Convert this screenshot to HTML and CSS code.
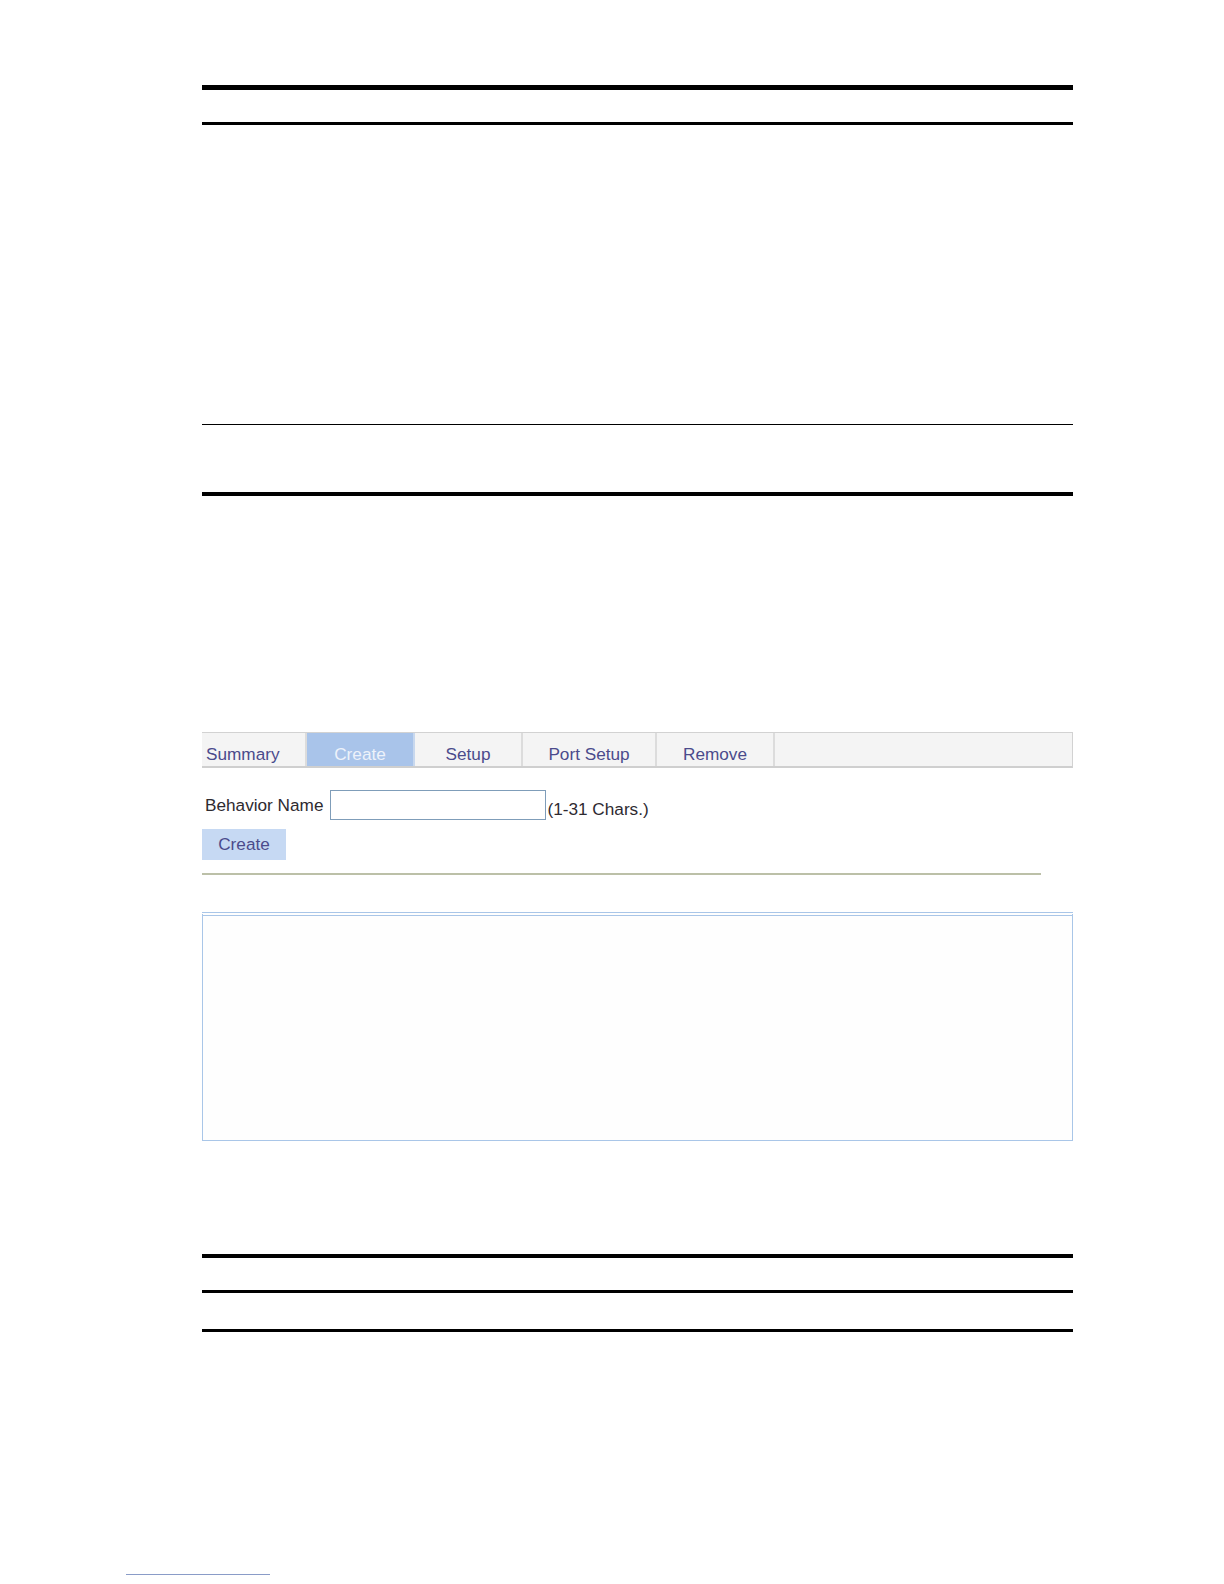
FILE: index.html
```html
<!DOCTYPE html>
<html>
<head>
<meta charset="utf-8">
<title>Create Behavior</title>
<link rel="stylesheet" href="styles.css">
</head>
<body>
<div class="page">
  <div class="rule r1"></div>
  <div class="rule r2"></div>
  <div class="rule r3"></div>
  <div class="rule r4"></div>

  <div class="tabs">
    <div class="tab tab-first">Summary</div>
    <div class="tab tab-active w108">Create</div>
    <div class="tab w108">Setup</div>
    <div class="tab w134">Port Setup</div>
    <div class="tab w118">Remove</div>
    <div class="tab tab-fill"></div>
  </div>

  <div class="form-row">
    <span class="label">Behavior Name</span>
    <input class="name-input" type="text">
    <span class="hint">(1-31 Chars.)</span>
  </div>
  <button class="btn">Create</button>
  <div class="sep"></div>

  <div class="panel"></div>

  <div class="rule r5"></div>
  <div class="rule r6"></div>
  <div class="rule r7"></div>
</div>
<div class="footer-link"></div>
</body>
</html>
```
FILE: styles.css
```css
html, body {
  margin: 0;
  padding: 0;
  background: #ffffff;
}
body {
  font-family: "Liberation Sans", Arial, sans-serif;
  font-size: 17.2px;
  color: #2a2a2a;
}
.page {
  margin-left: 202px;
  width: 871px;
  padding-top: 85px;
}
.rule { background: #000; }
.r1 { height: 5px; }
.r2 { height: 3px; margin-top: 32px; }
.r3 { height: 1px; margin-top: 299px; }
.r4 { height: 4px; margin-top: 67px; }

.tabs {
  margin-top: 236px;
  display: flex;
  height: 33px;
  background: #f4f4f4;
  border-top: 1px solid #d2d2d2;
  border-bottom: 2px solid #cfcfcf;
  border-right: 1px solid #d2d2d2;
}
.tab {
  box-sizing: border-box;
  height: 33px;
  line-height: 43px;
  color: #4b4b8c;
  text-align: center;
  border-right: 2px solid #dcdcdc;
  white-space: nowrap;
}
.tab-first {
  width: 105px;
  text-align: left;
  padding-left: 4px;
}
.w108 { width: 108px; }
.w134 { width: 134px; }
.w118 { width: 118px; }
.tab-active {
  background: #a9c4ea;
  color: #edf2fa;
  border-right-color: #c8d8ee;
}
.tab-fill {
  flex: 1;
  border-right: none;
}

.form-row {
  margin-top: 22px;
  display: flex;
  align-items: flex-start;
  height: 30px;
}
.label {
  margin-left: 3px;
  margin-top: 5px;
  color: #2e2a30;
}
.name-input {
  box-sizing: border-box;
  margin: 0 0 0 7px;
  width: 216px;
  height: 30px;
  border: 1px solid #7f9db9;
  padding: 0;
  background: #fff;
}
.hint {
  margin-top: 9px;
  margin-left: 1px;
  color: #2e2a30;
}
.btn {
  display: block;
  margin-top: 9px;
  width: 84px;
  height: 31px;
  border: none;
  background: #c6d9f3;
  color: #4b4b8c;
  font-family: "Liberation Sans", Arial, sans-serif;
  font-size: 17.2px;
  padding: 0;
}
.sep {
  margin-top: 13px;
  width: 839px;
  height: 2px;
  background: #bcc0a8;
}
.panel {
  box-sizing: border-box;
  margin-top: 37px;
  height: 229px;
  border: 1px solid #a9c6e8;
  border-top: 4px double #a9c6e8;
  background: #fefefe;
}
.r5 { height: 4px; margin-top: 113px; }
.r6 { height: 3px; margin-top: 32px; }
.r7 { height: 3px; margin-top: 36px; }

.footer-link {
  margin-top: 242px;
  margin-left: 126px;
  width: 144px;
  height: 1px;
  background: #8a9cc8;
}
```
